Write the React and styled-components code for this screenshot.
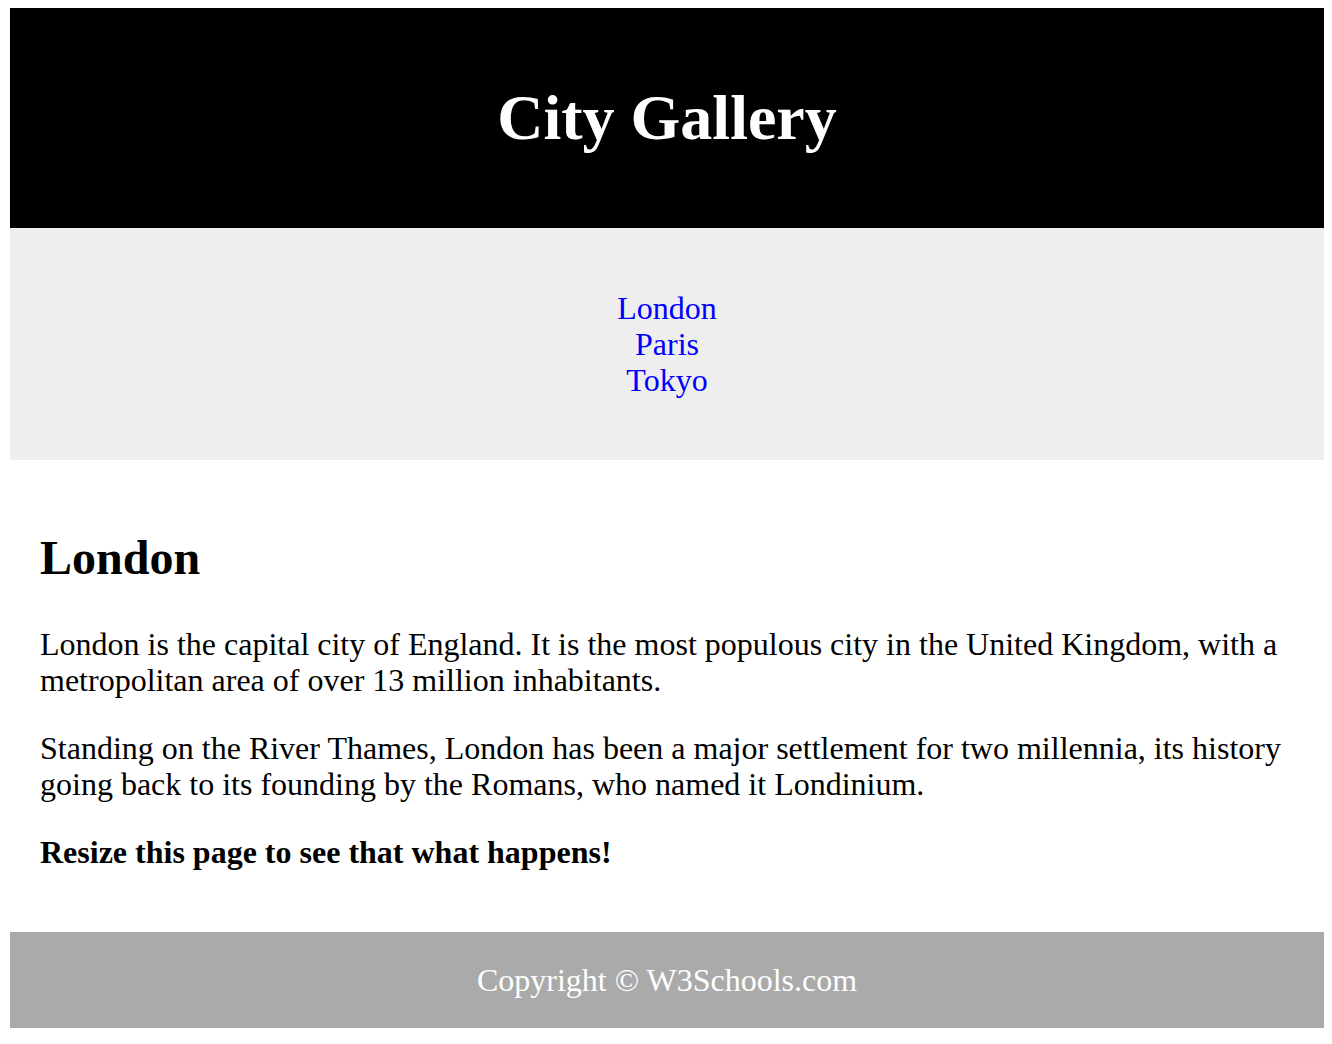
import React from 'react';
import styled, { createGlobalStyle } from 'styled-components';

const GlobalStyle = createGlobalStyle`
  body {
    margin: 8px 8px 8px 10px;
    font-family: "Liberation Serif", "Times New Roman", serif;
    font-size: 32px;
    line-height: 36px;
    background: #fff;
  }
`

const Header = styled.header`
  background-color: #000;
  padding: 30px;
  text-align: center;
  color: white;
  h1 {
    font-size: 64px;
    line-height: 74px;
    margin: 43px 0;
  }
`

const Nav = styled.nav`
  background: #eeeeee;
  padding: 30px;
  text-align: center;
  ul {
    list-style-type: none;
    padding: 0;
    margin: 32px 0;
  }
  a {
    color: #0000ff;
    text-decoration: none;
  }
`

const Article = styled.article`
  padding: 30px;
  h2 {
    font-size: 48px;
    line-height: 56px;
    margin: 40px 0;
  }
  p {
    margin: 32px 0;
  }
`

const Footer = styled.footer`
  background-color: #aaaaaa;
  padding: 30px;
  text-align: center;
  color: white;
`

const cities = ['London', 'Paris', 'Tokyo'];

const App = () => {
  return (
    <>
      <GlobalStyle />
      <Header>
        <h1>City Gallery</h1>
      </Header>
      <Nav>
        <ul>
          {cities.map(c => (
            <li key={c}><a href="#">{c}</a></li>
          ))}
        </ul>
      </Nav>
      <Article>
        <h2>London</h2>
        <p>London is the capital city of England. It is the most populous city in the United Kingdom, with a metropolitan area of over 13 million inhabitants.</p>
        <p>Standing on the River Thames, London has been a major settlement for two millennia, its history going back to its founding by the Romans, who named it Londinium.</p>
        <p><b>Resize this page to see that what happens!</b></p>
      </Article>
      <Footer>Copyright © W3Schools.com</Footer>
    </>
  );
}

export default App;
